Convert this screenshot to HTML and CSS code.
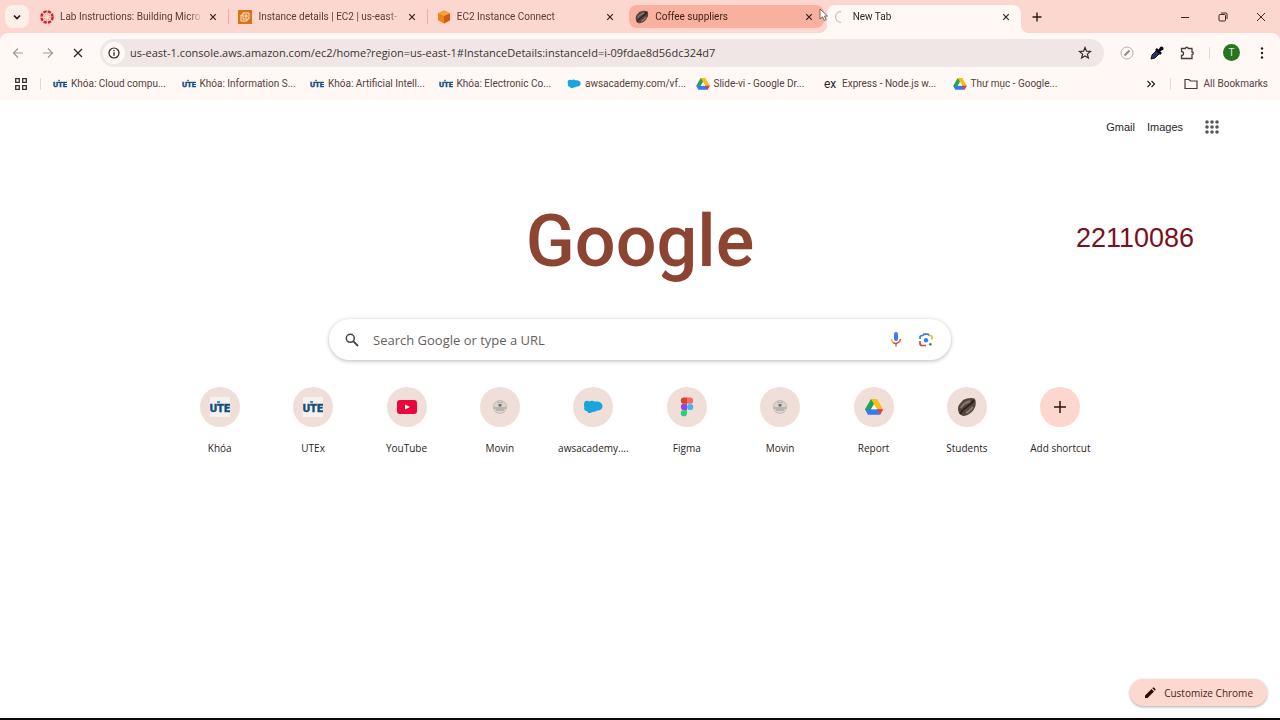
FILE: index.html
```html
<!DOCTYPE html>
<html lang="en">
<head>
<meta charset="utf-8">
<title>New Tab</title>
<link rel="stylesheet" href="styles.css">
</head>
<body>
<svg class="defs" width="0" height="0" aria-hidden="true">
  <symbol id="x" viewBox="0 0 10 10"><path d="M1.500 1.500l7 7M8.500 1.500l-7 7" fill="none" stroke="currentColor" stroke-width="1.500"/></symbol>
  <symbol id="ute" viewBox="0 0 20 14"><text x="10" y="12" text-anchor="middle" class="ute-text">UTE</text><path d="M7 1h3v2H7z" fill="#3b8fc4"/></symbol>
  <symbol id="cloud" viewBox="0 0 20 14"><path d="M1 4C1 1 4 0 6.500 1.500 8 .3 10.500.5 12 1.800c3-1 7 .5 7.500 4 .3 3-2.500 5-5.500 4.700-1.500 1.300-3 1.300-4.500 1.500C7 14 4.500 13 4 11 1.500 11 .5 8.500 1.500 7 .8 6 1 5 1 4z" fill="#16a5dc"/></symbol>
  <symbol id="drive" viewBox="0 0 18 16"><path d="M6 0h6L9 5.300 3.300 15.600 0 10.300z" fill="#20a653"/><path d="M6 0h6l6 10.300h-6z" fill="#fdbc10"/><path d="M0 10.300h18l-3 5.500H3z" fill="#3778ee"/><path d="M12 10.300h6l-3 5.500z" fill="#e8432f"/><path d="M9 5.300l3 5H6z" fill="#fff8f4"/></symbol>
  <symbol id="bean" viewBox="0 0 20 20"><path d="M1 12C1 7 5 5 6 3c4-2 9-3 12-1 1 2 1 6 0 8-2 5-6 8-11 9-4 0-6-4-6-7z" fill="#54453e"/><path d="M3 17C6 10 13 10 17 3" fill="none" stroke="#2a201c" stroke-width="1.600"/><path d="M4 11c2-4 4-5 9-7M9 16c4-2 5-4 7-6" fill="none" stroke="#8a786c" stroke-width="2"/></symbol>
  <symbol id="seal" viewBox="0 0 16 16"><circle cx="8" cy="8" r="6.500" fill="#ddd5cf" stroke="#b5afa9" stroke-width=".8"/><path d="M6.500 5h3v2.500h-3z" fill="#6f6a64"/><path d="M2 9h12M4 11h8" stroke="#95908a"/><path d="M5 3.500h6" stroke="#aaa49f" stroke-width=".8"/></symbol>
</svg>

<header class="browser">
  <div class="tabstrip">
    <button class="tab-search" aria-label="Search tabs"><svg width="10" height="10" viewBox="0 0 10 10"><path d="M2 3.500l3 3 3-3" fill="none" stroke="#211714" stroke-width="1.600"/></svg></button>
    <div class="tabs">
      <div class="tab">
        <svg class="fav" viewBox="0 0 14 14"><circle cx="7" cy="7" r="5.600" fill="none" stroke="#c9262c" stroke-width="2.400" stroke-dasharray="3.300 1.100"/><circle cx="7" cy="7" r="3" fill="none" stroke="#d9676a" stroke-dasharray="1 1.350"/></svg>
        <span class="title">Lab Instructions: Building Micro</span><button class="close" aria-label="Close tab"><svg><use href="#x"/></svg></button>
      </div>
      <div class="tab divided">
        <svg class="fav" viewBox="0 0 14 14"><path d="M0 0h14v14H0z" fill="#d9741d"/><path d="M5 3h6v6H5zM5 5H3v6h6V9" fill="none" stroke="#ffe7cc"/><path d="M7 5h2v2H7z" fill="none" stroke="#ffe7cc"/></svg>
        <span class="title">Instance details | EC2 | us-east-</span><button class="close" aria-label="Close tab"><svg><use href="#x"/></svg></button>
      </div>
      <div class="tab divided">
        <svg class="fav" viewBox="0 0 14 14"><path d="M7 .5l6 2.700v7L7 13.500l-6-3.300v-7z" fill="#ee8420"/><path d="M7 6l6-2.800v7L7 13.500z" fill="#cf5d17"/><path d="M1 3.200L7 .5l6 2.700L7 6z" fill="#f8a33c"/></svg>
        <span class="title">EC2 Instance Connect</span><button class="close" aria-label="Close tab"><svg><use href="#x"/></svg></button>
      </div>
      <div class="tab hovered">
        <svg class="fav"><use href="#bean"/></svg>
        <span class="title">Coffee suppliers</span><button class="close" aria-label="Close tab"><svg><use href="#x"/></svg></button>
      </div>
      <div class="tab active">
        <svg class="fav" viewBox="0 0 14 14"><path d="M8 1.500a5.500 5.500 0 0 0 0 11" fill="none" stroke="#cfc6c2" stroke-width="1.300"/></svg>
        <span class="title">New Tab</span><button class="close" aria-label="Close tab"><svg><use href="#x"/></svg></button>
      </div>
    </div>
    <button class="new-tab" aria-label="New tab"><svg width="10" height="10" viewBox="0 0 10 10"><path d="M5 .5v9M.5 5h9" stroke="#2b1b17" stroke-width="1.400"/></svg></button>
    <div class="window-controls">
      <button aria-label="Minimize"><svg width="10" height="10" viewBox="0 0 10 10"><path d="M1 5.500h8" stroke="#3a2925"/></svg></button>
      <button aria-label="Restore"><svg width="10" height="10" viewBox="0 0 10 10"><rect x="1" y="2.500" width="6.500" height="6.500" rx="1" fill="none" stroke="#3a2925"/><path d="M3 1h5a1 1 0 0 1 1 1v5" fill="none" stroke="#3a2925"/></svg></button>
      <button aria-label="Close window"><svg width="10" height="10" viewBox="0 0 10 10"><path d="M1 1l8 8M9 1L1 9" stroke="#3a2925"/></svg></button>
    </div>
    <svg class="cursor" width="10" height="14" viewBox="0 0 10 14" aria-hidden="true"><path d="M1 1v10l2.500-2.200L5.200 12.500l2-.8L5.500 8H8.500z" fill="#fff" stroke="#54423d" stroke-width=".8"/></svg>
  </div>

  <div class="toolbar">
    <nav class="nav-buttons" aria-label="Navigation">
      <button class="dim" aria-label="Back"><svg width="12" height="12" viewBox="0 0 12 12"><path d="M11 6H1.500M6 1.500L1.500 6 6 10.500" fill="none" stroke="currentColor" stroke-width="1.200"/></svg></button>
      <button class="dim" aria-label="Forward"><svg width="12" height="12" viewBox="0 0 12 12"><path d="M1 6h9.500M6 1.500L10.500 6 6 10.500" fill="none" stroke="currentColor" stroke-width="1.200"/></svg></button>
      <button aria-label="Stop"><svg width="10" height="10" viewBox="0 0 10 10"><path d="M1 1l8 8M9 1L1 9" stroke="currentColor" stroke-width="1.200"/></svg></button>
    </nav>
    <div class="omnibox">
      <button class="site-info" aria-label="Site information"><svg width="12" height="12" viewBox="0 0 12 12"><circle cx="6" cy="6" r="5" fill="none" stroke="#2c2422" stroke-width="1.200"/><path d="M6 5.200v3.500M6 3v1.200" stroke="#2c2422" stroke-width="1.300"/></svg></button>
      <input class="url" type="text" aria-label="Address bar" value="us-east-1.console.aws.amazon.com/ec2/home?region=us-east-1#InstanceDetails:instanceId=i-09fdae8d56dc324d7">
      <button aria-label="Bookmark this tab"><svg width="14" height="14" viewBox="0 0 14 14"><path d="M7 1.500l1.500 3.700 4 .3-3.100 2.600 1 3.900L7 9.900 3.600 12l1-3.900L1.500 5.500l4-.3z" fill="none" stroke="#372a27" stroke-width="1.200"/></svg></button>
    </div>
    <div class="extensions">
      <button aria-label="Extension"><svg width="14" height="14" viewBox="0 0 14 14"><circle cx="7" cy="7" r="6" fill="none" stroke="#b9b1ad"/><path d="M4.500 9.500l5-5" stroke="#8f8884" stroke-width="2"/></svg></button>
      <button aria-label="Color picker"><svg width="14" height="14" viewBox="0 0 14 14"><path d="M1 13l1-4 5-5 3 3-5 5z" fill="#2f3268" stroke="#100f20"/><path d="M6 3l5 5M8.500 5.500l3-3" stroke="#0c0b12" stroke-width="2.600"/><circle cx="11.500" cy="2.500" r="2" fill="#0c0b12"/></svg></button>
      <button aria-label="Extensions"><svg width="14" height="14" viewBox="0 0 14 14"><path d="M1.500 2.500H5.500a1.300 1.300 0 0 1 2.600 0h3.900V6a1.300 1.300 0 0 1 0 2.600v3.900H1.500V9.500a2 2 0 0 0 0-4z" fill="none" stroke="#4a3934" stroke-width="1.300"/></svg></button>
    </div>
    <span class="rule"></span>
    <button class="avatar" aria-label="Profile">T</button>
    <button class="menu" aria-label="Menu"><svg width="4" height="14" viewBox="0 0 4 14"><g fill="#2b1b17"><circle cx="2" cy="2.500" r="1.200"/><circle cx="2" cy="7" r="1.200"/><circle cx="2" cy="11.500" r="1.200"/></g></svg></button>
  </div>

  <div class="bookmarks">
    <button class="apps-tile" aria-label="Tab groups"><svg width="12" height="12" viewBox="0 0 12 12"><path d="M.7.7h3.600v3.600H.7zM7.700.7h3.600v3.600H7.700zM.7 7.700h3.600v3.600H.7zM7.700 7.700h3.600v3.600H7.700z" fill="none" stroke="#3a2f2c" stroke-width="1.300"/></svg></button>
    <span class="rule"></span>
    <nav class="bookmark-list" aria-label="Bookmarks">
      <a href="#"><svg><use href="#ute"/></svg>Khóa: Cloud compu...</a>
      <a href="#"><svg><use href="#ute"/></svg>Khóa: Information S...</a>
      <a href="#"><svg><use href="#ute"/></svg>Khóa: Artificial Intell...</a>
      <a href="#"><svg><use href="#ute"/></svg>Khóa: Electronic Co...</a>
      <a href="#"><svg><use href="#cloud"/></svg>awsacademy.com/vf...</a>
      <a href="#"><svg><use href="#drive"/></svg>Slide-vi - Google Dr...</a>
      <a href="#"><span class="express">ex</span>Express - Node.js w...</a>
      <a href="#"><svg><use href="#drive"/></svg>Thư mục - Google...</a>
    </nav>
    <button class="more" aria-label="More bookmarks"><svg width="10" height="8" viewBox="0 0 10 8"><path d="M1.500 1l3 3-3 3M5.500 1l3 3-3 3" fill="none" stroke="#33211d" stroke-width="1.200"/></svg></button>
    <span class="rule"></span>
    <button class="all-bookmarks"><svg width="14" height="12" viewBox="0 0 14 12"><path d="M1 1.500h4l1.500 1.500H13v7.500H1z" fill="none" stroke="#4a3b37" stroke-width="1.200"/></svg>All Bookmarks</button>
  </div>
</header>

<main class="page">
  <nav class="top-links" aria-label="Google">
    <a href="#">Gmail</a><a href="#">Images</a>
    <button aria-label="Google apps"><svg width="14" height="14" viewBox="0 0 14 14"><g fill="#5b5654"><circle cx="2" cy="2" r="1.800"/><circle cx="7" cy="2" r="1.800"/><circle cx="12" cy="2" r="1.800"/><circle cx="2" cy="7" r="1.800"/><circle cx="7" cy="7" r="1.800"/><circle cx="12" cy="7" r="1.800"/><circle cx="2" cy="12" r="1.800"/><circle cx="7" cy="12" r="1.800"/><circle cx="12" cy="12" r="1.800"/></g></svg></button>
  </nav>
  <h1 class="logo">Google</h1>
  <form class="search" role="search">
    <svg width="14" height="14" viewBox="0 0 14 14" aria-hidden="true"><circle cx="5.300" cy="5.300" r="4" fill="none" stroke="#474342" stroke-width="1.500"/><path d="M8.200 8.200l4.800 4.800" stroke="#474342" stroke-width="1.800"/></svg>
    <input type="text" aria-label="Search Google or type a URL" placeholder="Search Google or type a URL">
    <button type="button" aria-label="Search by voice"><svg width="12" height="16" viewBox="0 0 12 16"><rect x="4" y="0" width="4" height="9" rx="2" fill="#3b7ded"/><path d="M1.500 7c0 2 1 3.300 2.500 4" fill="none" stroke="#f5b51b" stroke-width="1.400"/><path d="M3.500 10.800c2.500 1.300 6.500.3 7-3.800" fill="none" stroke="#d84535" stroke-width="1.400"/><path d="M6 11.500v3" stroke="#b95955" stroke-width="1.400"/></svg></button>
    <button type="button" aria-label="Search by image"><svg width="14" height="14" viewBox="0 0 14 14"><g fill="none" stroke-width="1.700"><path d="M1 6V4.500A2 2 0 0 1 3 2.500h1l1-1.300h4l1 1.300" stroke="#3b7ded"/><path d="M10 2.500h1a2 2 0 0 1 2 2V6.500" stroke="#f5b51b"/><path d="M1 8v2.500a2 2 0 0 0 2 2h4" stroke="#d84535"/></g><circle cx="7" cy="7.200" r="2.200" fill="#3b7ded"/><circle cx="11.300" cy="11.300" r="1.400" fill="#27a253"/></svg></button>
  </form>
  <nav class="shortcuts" aria-label="Shortcuts">
    <a href="#"><span class="disc"><svg class="boxed" width="20" height="20" viewBox="0 0 20 20"><use href="#ute" y="3" width="20" height="14"/></svg></span>Khóa</a>
    <a href="#"><span class="disc"><svg class="boxed" width="20" height="20" viewBox="0 0 20 20"><use href="#ute" y="3" width="20" height="14"/></svg></span>UTEx</a>
    <a href="#"><span class="disc"><svg width="20" height="14" viewBox="0 0 20 14"><rect width="20" height="14" rx="3" fill="#e9063c"/><path d="M8 4.500l5 2.500-5 2.500z" fill="#fff"/></svg></span>YouTube</a>
    <a href="#"><span class="disc"><svg width="16" height="16"><use href="#seal"/></svg></span>Movin</a>
    <a href="#"><span class="disc"><svg width="20" height="14"><use href="#cloud"/></svg></span>awsacademy....</a>
    <a href="#"><span class="disc"><svg width="14" height="20" viewBox="0 0 14 20"><path d="M7 .5H4a3 3 0 0 0 0 6.300h3z" fill="#d8432c"/><path d="M7 .5h3a3 3 0 0 1 0 6.300H7z" fill="#f16d63"/><path d="M7 6.800H4a3 3 0 0 0 0 6.300h3z" fill="#9147e8"/><circle cx="10.200" cy="10" r="3.100" fill="#43b4ef"/><path d="M7 13.100H4a3.100 3.100 0 1 0 3 3.100z" fill="#2bcf7e"/></svg></span>Figma</a>
    <a href="#"><span class="disc"><svg width="16" height="16"><use href="#seal"/></svg></span>Movin</a>
    <a href="#"><span class="disc"><svg width="20" height="16"><use href="#drive"/></svg></span>Report</a>
    <a href="#"><span class="disc"><svg width="20" height="20"><use href="#bean"/></svg></span>Students</a>
    <button><span class="disc add"><svg width="12" height="12" viewBox="0 0 12 12"><path d="M6 0v12M0 6h12" stroke="#33130d" stroke-width="1.500"/></svg></span>Add shortcut</button>
  </nav>
  <p class="student-id">22110086</p>
  <button class="customize"><svg width="12" height="12" viewBox="0 0 12 12"><path d="M1 11V8.500L7.500 2 10 4.500 3.500 11zM8.300 1.200L9 .6q.5-.4 1 0l1.400 1.400q.4.500 0 1l-.6.700z" fill="#2e0d08"/></svg>Customize Chrome</button>
</main>
</body>
</html>
```

FILE: styles.css
```css
* { box-sizing: border-box; }
body {
  margin: 0;
  min-height: 100vh;
  display: flex;
  flex-direction: column;
  background: #fff;
  border-bottom: 2px solid #0a0a0a;
  color: #2b2422;
  font: 10px/16px "Open Sans", "Noto Sans", sans-serif;
}
button {
  display: flex;
  align-items: center;
  justify-content: center;
  padding: 0;
  border: 0;
  background: none;
  color: inherit;
  font: inherit;
}
a { color: inherit; text-decoration: none; }
svg { flex: none; display: block; }
input { border: 0; outline: 0; background: none; padding: 0; min-width: 0; }
.defs { display: none; }
.ute-text { font: 900 11px Roboto, sans-serif; fill: #144f80; stroke: #144f80; stroke-width: .4px; }
.rule { flex: none; width: 1px; height: 12px; background: #efd3cf; }

.browser { background: #fcd7cf; font-family: Roboto, "Noto Sans", sans-serif; }
.tabstrip { position: relative; display: flex; height: 33px; padding-left: 5px; }
.tab-search { flex: none; width: 24px; height: 23px; margin: 5px 2px 0 0; border-radius: 8px; background: #feeeea; }
.tabs { display: flex; flex: 0 1 990px; min-width: 0; }
.tab {
  position: relative;
  display: flex;
  align-items: center;
  flex: 1 1 0;
  min-width: 0;
  height: 23px;
  margin-top: 5px;
  padding: 0 7px 0 9px;
  color: #5a3b34;
}
.tab.divided { border-left: 1px solid #f3aaa0; border-image: linear-gradient(transparent 20%, #f3aaa0 20%, #f3aaa0 80%, transparent 80%) 1; }
.tab.hovered { margin-left: 4px; padding-left: 6px; border-radius: 8px; background: #f9b09e; color: #40211b; }
.tab.active { height: 28px; padding-bottom: 5px; margin-left: 3px; padding-left: 6px; border-radius: 8px 8px 0 0; background: #fff8f4; color: #332421; }
.tab.active::before,
.tab.active::after {
  content: "";
  position: absolute;
  bottom: 0;
  width: 8px;
  height: 8px;
}
.tab.active::before { right: 100%; background: radial-gradient(circle at 0 0, transparent 8px, #fff8f4 8px); }
.tab.active::after { left: 100%; background: radial-gradient(circle at 100% 0, transparent 8px, #fff8f4 8px); }
.fav { width: 14px; height: 14px; }
.title {
  flex: 1;
  min-width: 0;
  margin: 0 2px 0 6px;
  overflow: hidden;
  white-space: nowrap;
  mask-image: linear-gradient(90deg, #000 90%, transparent);
}
.close { width: 16px; height: 16px; color: #33211d; }
.close svg { width: 8px; height: 8px; }
.new-tab { width: 32px; height: 33px; }
.window-controls { display: flex; margin-left: auto; }
.window-controls button { width: 38px; height: 33px; }
.cursor { position: absolute; left: 819px; top: 8px; }

.toolbar { display: flex; align-items: center; height: 39px; padding-right: 8px; background: #fff8f4; border-radius: 8px 8px 0 0; }
.nav-buttons { display: flex; padding: 0 7px 0 3px; }
.nav-buttons button { width: 30px; height: 30px; }
.nav-buttons .dim { color: #a29a96; }
.omnibox { display: flex; align-items: center; flex: 1; height: 28px; padding: 0 12px 0 3px; border-radius: 14px; background: #f0e6e6; }
.site-info { width: 22px; height: 22px; border-radius: 50%; background: #fff8f4; }
.url { flex: 1; margin-left: 5px; color: #3d3332; font: 11px/16px "Open Sans", "Noto Sans", sans-serif; }
.extensions { display: flex; margin-left: 8px; }
.extensions button { width: 30px; height: 30px; }
.toolbar .rule { margin: 0 13px 0 7px; }
.avatar { width: 17px; height: 17px; border-radius: 50%; background: #28741f; color: #d9efd4; }
.menu { width: 20px; height: 20px; margin-left: 12px; }

.bookmarks { display: flex; align-items: center; height: 28px; padding: 0 12px 4px 15px; background: #fff8f4; color: #55423d; }
.apps-tile { margin-right: 13px; }
.bookmark-list { display: flex; flex: 0 1 1028px; min-width: 0; margin-left: 12px; }
.bookmark-list a { display: flex; align-items: center; gap: 4px; flex: 1 1 0; min-width: 0; white-space: nowrap; overflow: hidden; }
.bookmark-list svg { width: 14px; height: 12px; }
.express { width: 14px; color: #2b2422; font-size: 12px; }
.more { margin-left: auto; }
.bookmarks .more + .rule { margin: 0 13px 0 14px; }
.all-bookmarks { gap: 6px; white-space: nowrap; }

.page { position: relative; flex: 1; display: flex; flex-direction: column; align-items: center; }
.top-links { display: flex; align-items: center; align-self: flex-end; gap: 12px; height: 24px; margin: 15px 61px 0 0; color: #2a2827; font: 11px/16px "Liberation Sans", Arial, sans-serif; }
.top-links button { margin-left: 10px; }
.logo { margin: 59px 0 0; color: #8b4532; font: 500 72px/88px Roboto, sans-serif; }
.search {
  display: flex;
  align-items: center;
  width: 622px;
  max-width: 90%;
  height: 41px;
  margin-top: 33px;
  padding: 0 18px 0 16px;
  border-radius: 21px;
  background: #fff;
  box-shadow: 0 1px 4px rgba(0, 0, 0, .28);
}
.search input { flex: 1; margin-left: 14px; color: #2b2422; font: 13px/20px "Open Sans", "Noto Sans", sans-serif; }
.search input::placeholder { color: #66615f; opacity: 1; }
.search button + button { margin-left: 17px; }
.shortcuts { display: flex; width: 934px; max-width: 96%; margin-top: 27px; color: #2b2422; }
.shortcuts > * { display: flex; flex-direction: column; align-items: center; flex: 1 1 0; gap: 13px; min-width: 0; white-space: nowrap; }
.disc { display: flex; align-items: center; justify-content: center; width: 40px; height: 40px; border-radius: 50%; background: #f0ded9; }
.disc.add { background: #fdd6cd; }
.boxed { background: #f6f1ef; }
.student-id { position: absolute; right: 86px; top: 122px; margin: 0; color: #7b1020; font: 27px/32px "Liberation Sans", Arial, sans-serif; }
.customize {
  gap: 8px;
  align-self: flex-end;
  height: 27px;
  margin: auto 13px 12px 0;
  padding: 0 14px;
  border-radius: 14px;
  background: #fdd8cf;
  color: #4c2119;
  box-shadow: 0 1px 3px rgba(0, 0, 0, .35);
}
```
